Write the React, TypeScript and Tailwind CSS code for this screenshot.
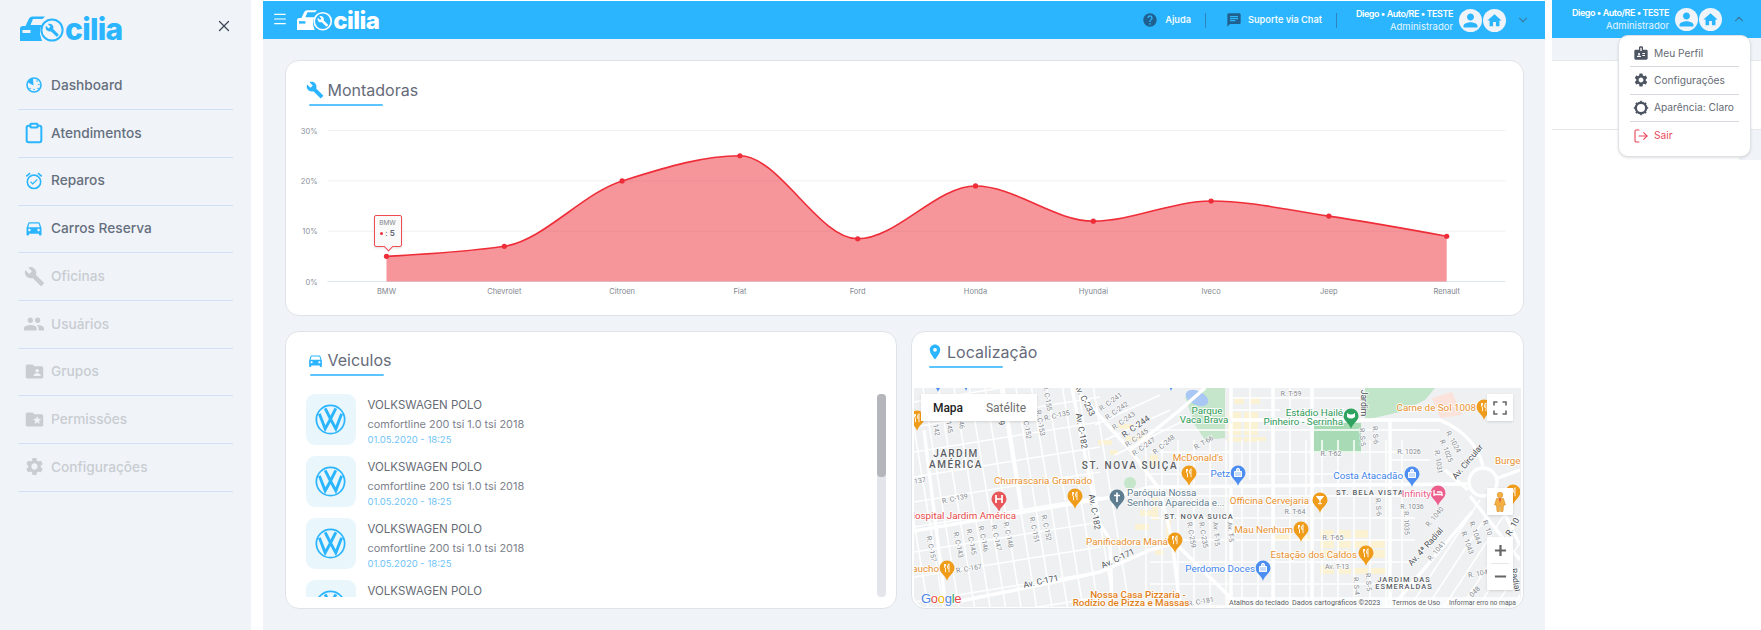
import React from 'react';
import { Clipboard, ChevronDown, ChevronUp, LogOut, Menu, X } from 'lucide-react';
import {
  MdBadge,
  MdBuild,
  MdChat,
  MdDirectionsCar,
  MdFolderShared,
  MdFolderSpecial,
  MdHelp,
  MdHome,
  MdLocationOn,
  MdOutlineAlarmOn,
  MdPeople,
  MdPerson,
  MdSettings,
} from 'react-icons/md';

const WRENCH =
  'M22.7 19l-9.1-9.1c.9-2.3.4-5-1.5-6.9-2-2-5-2.4-7.4-1.3L9 6 6 9 1.6 4.7C.4 7.1.9 10.1 2.9 12.1c1.9 1.9 4.6 2.4 6.9 1.5l9.1 9.1c.4.4 1 .4 1.4 0l2.3-2.3c.5-.4.5-1.1.1-1.4z';

const Logo = ({ color, cut, className }: { color: string; cut: string; className: string }) => (
  <svg viewBox="0 0 102 27" className={`overflow-visible ${className}`}>
    <path
      d="M0 26V13.5Q0 11 3 11H5.5L9 3.5Q10 1.5 12.5 1.5H25L22.5 4H13L10.5 10H21.5Q19.5 14 20 19L22 26Z"
      fill={color}
    />
    <rect x="2.5" y="15" width="8" height="3" fill={cut} />
    <circle cx="32" cy="15" r="10.6" fill="none" stroke={color} strokeWidth="2" />
    <path d={WRENCH} fill={color} transform="translate(25 8) scale(0.6)" />
    <text x="45" y="25" fontSize="30" fontWeight="800" fill={color} letterSpacing="-0.7">
      cilia
    </text>
  </svg>
);

const DashIcon = () => (
  <svg viewBox="0 0 16 16" className="h-[16px] w-[16px] text-[#2bb5ff]">
    <circle cx="8" cy="8" r="7" fill="none" stroke="currentColor" strokeWidth="1.6" />
    <path d="M7 1.5 A6.5 6.5 0 0 0 2 5.5L7.5 8.5Z" fill="currentColor" />
    <path d="M4 11.5h.1M8 12.5h.1M12 11.5h.1M12.8 7.5h.1M11 4h.1" stroke="currentColor" strokeWidth="1.5" strokeLinecap="round" />
  </svg>
);

const navItems = [
  { label: 'Dashboard', icon: <DashIcon />, active: true },
  { label: 'Atendimentos', icon: <Clipboard className="h-[22px] w-[22px] text-[#2bb5ff]" strokeWidth={2.2} />, active: true },
  { label: 'Reparos', icon: <MdOutlineAlarmOn className="h-[20px] w-[20px] text-[#2bb5ff]" />, active: true },
  { label: 'Carros Reserva', icon: <MdDirectionsCar className="h-[20px] w-[20px] text-[#2bb5ff]" />, active: true },
  { label: 'Oficinas', icon: <MdBuild className="h-[21px] w-[21px] text-[#c9ccd1]" />, active: false },
  { label: 'Usuários', icon: <MdPeople className="h-[22px] w-[22px] text-[#c9ccd1]" />, active: false },
  { label: 'Grupos', icon: <MdFolderShared className="h-[21px] w-[21px] text-[#c9ccd1]" />, active: false },
  { label: 'Permissões', icon: <MdFolderSpecial className="h-[21px] w-[21px] text-[#c9ccd1]" />, active: false },
  { label: 'Configurações', icon: <MdSettings className="h-[21px] w-[21px] text-[#c9ccd1]" />, active: false },
];

const Sidebar = () => (
  <aside className="flex h-[630px] w-[251px] shrink-0 flex-col bg-[#f0f4f9]">
    <div className="flex h-[62.5px] items-start justify-between pl-[20px] pr-[18px] pt-[15px]">
      <Logo color="#2bb5ff" cut="#f0f4f9" className="h-[27px] w-[102px]" />
      <X className="mt-[2px] h-[18px] w-[18px] text-[#3f4654]" strokeWidth={1.7} />
    </div>
    <nav className="mx-[18px] flex flex-col">
      {navItems.map((item) => (
        <div key={item.label} className="flex h-[47.7px] items-center border-b border-[#cfe0f7] pb-[1px]">
          <span className="ml-[4px] mr-[5px] flex w-[24px] justify-center">{item.icon}</span>
          <span className={`text-[13.7px] font-medium ${item.active ? 'text-[#666f7d]' : 'text-[#c9ccd1]'}`}>{item.label}</span>
        </div>
      ))}
    </nav>
  </aside>
);

const UserBlock = ({ open }: { open: boolean }) => (
  <div className="flex items-center">
    <div className="flex flex-col items-end text-right">
      <span className="text-[9px] font-semibold leading-[13px] tracking-[-0.45px] text-white">Diego • Auto/RE • TESTE</span>
      <span className="text-[9.5px] leading-[13px] text-[#e4f5ff]">Administrador</span>
    </div>
    <span className="ml-[6px] flex h-[23px] w-[23px] items-center justify-center rounded-full bg-[#f0f4f9]">
      <MdPerson className="h-[21px] w-[21px] text-[#2bb5ff]" />
    </span>
    <span className="ml-px flex h-[23px] w-[23px] items-center justify-center rounded-full bg-[#f0f4f9]">
      <MdHome className="h-[17px] w-[17px] text-[#2bb5ff]" />
    </span>
    <span className="ml-[9px] flex w-[16px] justify-center">
      {open ? <ChevronUp className="h-[14px] w-[14px] text-[#3b7ea8]" /> : <ChevronDown className="h-[14px] w-[14px] text-[#3b7ea8]" />}
    </span>
  </div>
);

const TopBar = () => (
  <header className="flex h-[38px] items-center justify-between bg-[#2bb5ff] pl-[9px] pr-[14px]">
    <div className="flex items-center">
      <Menu className="-mt-[3px] h-[16px] w-[16px] text-white" strokeWidth={1.8} />
      <Logo color="#ffffff" cut="#2bb5ff" className="-mt-[1px] ml-[9px] h-[22px] w-[82px]" />
    </div>
    <div className="flex items-center">
      <MdHelp className="h-[16px] w-[16px] text-[#20608f]" />
      <span className="ml-[7px] text-[9.2px] font-semibold text-[#eef9ff]">Ajuda</span>
      <span className="mx-[14px] h-[15px] w-px bg-[#2a86bd]" />
      <MdChat className="ml-[6px] h-[16px] w-[16px] text-[#20608f]" />
      <span className="ml-[6px] text-[9.2px] font-semibold text-[#eef9ff]">Suporte via Chat</span>
      <span className="ml-[14px] mr-[19px] h-[15px] w-px bg-[#2a86bd]" />
      <UserBlock open={false} />
    </div>
  </header>
);

const CardTitle = ({ icon, title }: { icon: React.ReactNode; title: string }) => (
  <div className="flex flex-col items-start">
    <div className="flex h-[24px] items-center">
      {icon}
      <span className="text-[16px] leading-[24px] text-[#666b7a]">{title}</span>
    </div>
    <div className="ml-[3px] mt-[2px] h-[2px] w-[74px] rounded-full bg-[#5cc4ff]" />
  </div>
);

const values = [5, 7, 20, 25, 8.5, 19, 12, 16, 13, 9];
const brands = ['BMW', 'Chevrolet', 'Citroen', 'Fiat', 'Ford', 'Honda', 'Hyundai', 'Iveco', 'Jeep', 'Renault'];
const STEP = 117.8;
const px = (i: number) => 386 + i * STEP;
const py = (v: number) => 281.5 - v * 5.03;

function curvePath() {
  const ys = values.map(py);
  const s = ys.slice(1).map((y, i) => (y - ys[i]) / STEP);
  const m = ys.map((_, i) => {
    if (i === 0 || i === ys.length - 1) return 0;
    if (s[i - 1] * s[i] <= 0) return 0;
    return (2 * s[i - 1] * s[i]) / (s[i - 1] + s[i]);
  });
  m[0] = (3 * s[0] - m[1]) / 2;
  m[ys.length - 1] = (3 * s[s.length - 1] - m[ys.length - 2]) / 2;
  let d = `M${px(0)} ${ys[0]}`;
  for (let i = 0; i < ys.length - 1; i++) {
    const k = STEP / 3;
    d += `C${px(i) + k} ${ys[i] + m[i] * k} ${px(i + 1) - k} ${ys[i + 1] - m[i + 1] * k} ${px(i + 1)} ${ys[i + 1]}`;
  }
  return d;
}

const AreaChart = () => {
  const line = curvePath();
  return (
    <div className="relative h-[204px] w-full">
      <svg viewBox="285.5 106 1237 204" className="h-[204px] w-full">
        {[0, 10, 20, 30].map((t) => (
          <g key={t}>
            <line x1="327" x2="1505" y1={py(t)} y2={py(t)} stroke={t === 0 ? '#e1e5ee' : '#eef0f3'} strokeWidth="1" />
            <text x="317" y={py(t) + 3} textAnchor="end" fontSize="7.5" fill="#8a8f98">
              {t}%
            </text>
          </g>
        ))}
        <path d={`${line}L${px(9)} ${py(0)}L${px(0)} ${py(0)}Z`} fill="#ee2d38" fillOpacity="0.5" />
        <path d={line} fill="none" stroke="#ee2d38" strokeWidth="1.6" />
        {values.map((v, i) => (
          <circle key={brands[i]} cx={px(i)} cy={py(v)} r="2.6" fill="#ee2d38" />
        ))}
        {brands.map((b, i) => (
          <text key={b} x={px(i)} y="294" textAnchor="middle" fontSize="7.5" fill="#83878f">
            {b}
          </text>
        ))}
      </svg>
      <div className="absolute left-[88px] top-[109px] flex h-[32px] w-[28px] flex-col items-center rounded-[2px] border border-[#ef4b52] bg-[#f9f9f9] pt-[3px] shadow-sm">
        <span className="text-[6.5px] leading-[9px] text-[#83878f]">BMW</span>
        <span className="flex items-center text-[8px] font-semibold leading-[11px] text-[#5a5f6a]">
          <span className="mr-[2px] h-[3px] w-[3px] rounded-full bg-[#ee2d38]" />
          <span className="font-normal">:</span>
          <span className="ml-[2px]">5</span>
        </span>
        <span className="absolute -bottom-[4px] left-[10px] h-[7px] w-[7px] rotate-45 border-b border-r border-[#ef4b52] bg-[#f9f9f9]" />
      </div>
    </div>
  );
};

const VwLogo = () => (
  <svg viewBox="0 0 32 32" className="h-[31px] w-[31px]">
    <circle cx="16" cy="16" r="14.6" fill="none" stroke="#2bb5ff" strokeWidth="1.8" />
    <path d="M10.5 4.5L16 15.5L21.5 4.5" fill="none" stroke="#2bb5ff" strokeWidth="3" />
    <path d="M4.5 10L10.5 25.5L16 15.5L21.5 25.5L27.5 10" fill="none" stroke="#2bb5ff" strokeWidth="3" />
  </svg>
);

const VehicleRow = () => (
  <div className="flex h-[51px] shrink-0 items-start">
    <div className="flex h-[51px] w-[50px] shrink-0 items-center justify-center rounded-[9px] bg-[#e9f6fc]">
      <VwLogo />
    </div>
    <div className="ml-[12px] flex flex-col pt-[2px]">
      <span className="text-[11.5px] leading-[18px] text-[#666b75]">VOLKSWAGEN POLO</span>
      <span className="text-[10.9px] leading-[20px] text-[#7d828b]">comfortline 200 tsi 1.0 tsi 2018</span>
      <span className="text-[9.5px] leading-[11px] text-[#6fc3f7]">01.05.2020 - 18:25</span>
    </div>
  </div>
);

const VehiclesCard = () => (
  <section className="flex h-[278px] flex-col rounded-[14px] border border-[#dfe3e8] bg-white">
    <div className="pl-[21px] pt-[16px]">
      <CardTitle icon={<MdDirectionsCar className="mr-[4px] h-[17px] w-[17px] text-[#2bb5ff]" />} title="Veiculos" />
    </div>
    <div className="mt-[18px] flex h-[203px] pl-[20px] pr-[10px]">
      <div className="flex flex-1 flex-col gap-[10.9px] overflow-hidden">
        <VehicleRow />
        <VehicleRow />
        <VehicleRow />
        <VehicleRow />
      </div>
      <div className="h-full w-[9px] rounded-[4px] bg-[#e3e5ea]">
        <div className="h-[83px] rounded-[4px] bg-[#b5b6bb]" />
      </div>
    </div>
  </section>
);

const GREY = '#85898f';
const roadLabels: [number, number, string, number][] = [
  [1047, 398, 'R. C-155', 80], [1040, 423, 'R. C-153', 80], [1057, 416, 'R. C-135', -13], [1027, 430, 'C-152', 80],
  [936, 430, '142', 80], [949, 427, '145', 80], [961, 425, '46', 80], [1111, 402, 'R. C-241', -35],
  [1117, 411, 'R. C-242', -35], [1124, 421, 'R. C-243', -35], [1137, 438, 'R. C-245', -35], [1144, 447, 'R. C-247', -35],
  [1164, 445, 'R. C-248', -40], [1204, 443, 'R. T-66', -30], [920, 481, '137', -10], [955, 499, 'R. C-139', -12],
  [1008, 535, 'R. C-148', 78], [996, 538, 'R. C-147', 78], [983, 539, 'R. C-146', 78], [971, 542, 'R. C-145', 78],
  [958, 545, 'R. C-143', 78], [931, 549, 'R. C-157', 78], [1034, 530, 'R. C-151', 78], [1046, 528, 'R. C-152', 78],
  [969, 569, 'R. C-167', -10], [1191, 535, 'R. C-259', 80], [1203, 535, 'R. C-235', 80], [1216, 534, 'Av. T-15', 85],
  [1230, 532, 'Av. T-5', 85], [1201, 602, 'R. C-181', -10], [1291, 394, 'R. T-59', 0], [1331, 454, 'R. T-62', 0],
  [1295, 512, 'R. T-64', 0], [1333, 538, 'R. T-65', 0], [1337, 567, 'Av. T-13', 0], [1362, 437, 'R. S-5', 85],
  [1375, 435, 'R. S-6', 85], [1378, 507, 'R. S-6', 85], [1368, 582, 'R. S-5', 85], [1356, 586, 'R. S-4', 85],
  [1409, 452, 'R. 1026', 0], [1412, 507, 'R. 1036', 0], [1406, 523, 'R. 1035', 88], [1438, 462, 'R. 1031', 82],
  [1446, 451, 'R. 1025', 68], [1453, 442, 'R. 1024', 62], [1435, 517, 'R. 1040', -50], [1437, 551, 'R. 1041', -50],
  [1475, 533, 'R. 1044', 70], [1467, 543, 'R. 1043', 70], [1487, 528, 'R. 10', 70], [1478, 574, 'R. 104', -10],
  [1475, 592, '048', -45],
];
const majorLabels: [number, number, string, number][] = [
  [1084, 400, 'Av. C-233', 62], [1081, 431, 'Av. C-182', 80], [1094, 512, 'Av. C-182', 80], [1136, 427, 'R. C-244', -35],
  [1041, 582, 'Av. C-171', -12], [1118, 559, 'Av. C-171', -25], [1363, 403, 'Jardim', 90], [1468, 462, 'Av. Circular', -50],
  [1426, 547, 'Av. 4ª Radial', -48], [1513, 527, 'R. 10', -60], [1515, 580, 'Radial', 80], [1001, 423, '9', 80],
];
const areaLabels: [number, number, string, number, number][] = [
  [956, 457, 'JARDIM', 10, 1.5], [956, 468, 'AMÉRICA', 10, 1.5], [1130, 469, 'ST. NOVA SUIÇA', 10, 1.6],
  [1199, 519, 'ST. NOVA SUICA', 7.5, 1], [1370, 495, 'ST. BELA VISTA', 7.5, 1.1], [1404, 582, 'JARDIM DAS', 7.5, 1],
  [1404, 589, 'ESMERALDAS', 7.5, 1],
];
const ORANGE = '#e8912f';
const BLUE = '#3e84ec';
const poiLabels: [number, number, string, string, 'middle' | 'end' | 'start', number?][] = [
  [1043, 484, 'Churrascaria Gramado', ORANGE, 'middle'], [1127, 545, 'Panificadora Maná', ORANGE, 'middle'],
  [1198, 461, "McDonald's", ORANGE, 'middle'], [939, 572, 'Gaucho', ORANGE, 'end'], [1138, 598, 'Nossa Casa Pizzaria -', '#e37f17', 'middle', 500],
  [1131, 606, 'Rodízio de Pizza e Massas', '#e37f17', 'middle', 500], [1309, 504, 'Officina Cervejaria', ORANGE, 'end'],
  [1293, 533, 'Mau Nenhum', ORANGE, 'end'], [1357, 558, 'Estação dos Caldos', ORANGE, 'end'], [1476, 411, 'Carne de Sol 1008', ORANGE, 'end'],
  [1495, 464, 'Burge', ORANGE, 'start'], [1230, 477, 'Petz', BLUE, 'end'], [1403, 479, 'Costa Atacadão', BLUE, 'end'],
  [1255, 572, 'Perdomo Doces', BLUE, 'end'], [962, 519, 'Hospital Jardim América', '#e8494a', 'middle'],
  [1431, 497, 'Infinity', '#ec5f8d', 'end'], [1207, 414, 'Parque', '#2e9a58', 'middle'], [1204, 423, 'Vaca Brava', '#2e9a58', 'middle'],
  [1343, 416, 'Estádio Hailé', '#2e9a58', 'end'], [1343, 425, 'Pinheiro - Serrinha', '#2e9a58', 'end'],
  [1127, 496, 'Paróquia Nossa', '#5f7d90', 'start'], [1127, 506, 'Senhora Aparecida e...', '#5f7d90', 'start'],
];
type Glyph = 'fork' | 'bag' | 'glass' | 'bed' | 'cross' | 'H' | 'stadium';
const pins: [number, number, string, Glyph][] = [
  [917, 418, '#f09c1b', 'fork'], [1075, 496, '#f09c1b', 'fork'], [1175, 540, '#f09c1b', 'fork'], [1189, 473, '#f09c1b', 'fork'],
  [947, 568, '#f09c1b', 'fork'], [1320, 500, '#f09c1b', 'glass'], [1301, 529, '#f09c1b', 'fork'], [1366, 553, '#f09c1b', 'fork'],
  [1484, 407, '#f09c1b', 'fork'], [1513, 492, '#f09c1b', 'fork'], [1238, 473, '#4b8df0', 'bag'], [1412, 474, '#4b8df0', 'bag'],
  [1263, 568, '#4b8df0', 'bag'], [999, 499, '#e8585a', 'H'], [1438, 493, '#ec5f8d', 'bed'], [1351, 416, '#2ea35f', 'stadium'],
  [1117, 497, '#5f7d90', 'cross'], [938, 379, '#4b8df0', 'bag'], [966, 378, '#4b8df0', 'bag'], [1171, 378, '#4b8df0', 'bag'],
];

const PinGlyph = ({ x, y, glyph }: { x: number; y: number; glyph: Glyph }) => {
  if (glyph === 'H') {
    return <path d={`M${x - 3} ${y - 4}v8M${x + 3} ${y - 4}v8M${x - 3} ${y}h6`} stroke="#fff" strokeWidth="1.7" fill="none" />;
  }
  if (glyph === 'cross') {
    return <path d={`M${x} ${y - 4.5}v9.5M${x - 3} ${y - 1.5}h6`} stroke="#fff" strokeWidth="1.7" fill="none" />;
  }
  if (glyph === 'bag') {
    return <path d={`M${x - 3.5} ${y - 1.5}h7v5h-7zM${x - 1.6} ${y - 1.5}v-1.6a1.6 1.6 0 0 1 3.2 0v1.6`} stroke="#fff" strokeWidth="1" fill="#fff" fillOpacity="0.7" />;
  }
  if (glyph === 'glass') {
    return <path d={`M${x - 3.5} ${y - 3.5}h7L${x} ${y + 0.5}ZM${x} ${y}v3.5M${x - 2} ${y + 3.7}h4`} stroke="#fff" strokeWidth="1" fill="#fff" />;
  }
  if (glyph === 'bed') {
    return <path d={`M${x - 4} ${y - 3}v6M${x - 4} ${y + 1.5}h8v1.5M${x - 1} ${y - 1}h4q1 0 1 2`} stroke="#fff" strokeWidth="1.3" fill="none" />;
  }
  if (glyph === 'stadium') {
    return <path d={`M${x - 4} ${y - 3}q4 3 8 0v4q-4 3-8 0z`} fill="#fff" />;
  }
  return <path d={`M${x - 2.5} ${y - 4}v3q0 1 1 1.2v4M${x - 1.5} ${y - 4}v2.5M${x + 2} ${y + 4.2}v-8.5q-1.5 1-1.5 3.5v1h1.5`} stroke="#fff" strokeWidth="0.9" fill="none" />;
};

const yellowBlocks: [number, number, number, number][] = [
  [1228, 412, 13, 23], [1244, 412, 14, 23], [1234, 398, 10, 6], [1250, 398, 10, 6], [1228, 437, 14, 5], [1244, 437, 14, 5],
  [1258, 437, 8, 4], [1320, 530, 14, 8], [1337, 530, 14, 8], [1354, 530, 14, 8], [1320, 540, 14, 8], [1337, 540, 14, 8],
  [1354, 540, 14, 8], [1371, 540, 14, 8], [1320, 550, 14, 8], [1337, 550, 14, 8], [1371, 550, 14, 8], [1320, 566, 14, 8],
  [1337, 568, 14, 6], [1354, 568, 14, 6], [1371, 568, 14, 6], [1300, 535, 10, 6], [1272, 535, 18, 5], [1098, 440, 14, 5],
  [1110, 450, 8, 5], [1118, 424, 16, 5], [1126, 436, 14, 5], [1140, 430, 6, 12], [1150, 455, 8, 12], [1140, 510, 14, 6],
  [1135, 524, 14, 6], [1152, 498, 6, 22], [1166, 520, 5, 20], [1155, 550, 9, 5],
];

const MapView = () => {
  const verticalsA = Array.from({ length: 14 }, (_, i) => 892 + i * 15.5);
  const horizontalsA = Array.from({ length: 10 }, (_, i) => 402 + i * 25);
  const verticalsB = Array.from({ length: 17 }, (_, i) => 1146 + i * 16);
  const horizontalsB = Array.from({ length: 9 }, (_, i) => 430 + i * 22);
  const diagonals = Array.from({ length: 7 }, (_, i) => 1410 + i * 17);
  return (
    <div className="relative mx-[2px] mt-[20px] h-[219px] overflow-hidden rounded-b-[12px] bg-[#eef0f2]">
      <svg viewBox="914 388 606 219" className="h-[219px] w-[606px] font-[Roboto,sans-serif]">
        <polygon points="1185,397 1207,388 1225,388 1225,438 1205,440 1195,425" fill="#c5e6cb" />
        <ellipse cx="1197" cy="398" rx="12" ry="7" transform="rotate(25 1197 398)" fill="#a9c7f5" />
        <polygon points="1365,388 1435,388 1425,400 1400,412 1365,420" fill="#c1e5c9" />
        <polygon points="1432,398 1452,392 1462,415 1440,418" fill="#fbe3dc" />
        <rect x="1314" y="423" width="47" height="30" fill="#a8dab5" />
        {yellowBlocks.map(([x, y, w, h]) => (
          <rect key={`${x}-${y}`} x={x} y={y} width={w} height={h} fill="#fbf1d3" />
        ))}
        <g stroke="#ffffff" fill="none" strokeWidth="1.5">
          {verticalsA.map((x) => (
            <line key={x} x1={x} y1="388" x2={x + 36} y2="607" />
          ))}
          {horizontalsA.map((y) => (
            <line key={y} x1="914" y1={y} x2="1100" y2={y - 30} />
          ))}
          {verticalsB.map((x) => (
            <line key={x} x1={x} y1="440" x2={x} y2="607" />
          ))}
          {horizontalsB.map((y) => (
            <line key={y} x1="1150" y1={y} x2="1415" y2={y} />
          ))}
          {diagonals.map((x) => (
            <line key={x} x1={x} y1="607" x2={x + 70} y2="500" />
          ))}
          <path d="M1230 398H1360M1230 410H1280M1290 388V480M1250 388V480M1390 430H1440M1390 460H1430" />
          <path d="M1095 425L1160 395M1105 440L1170 410M1115 455L1185 420" />
        </g>
        <g stroke="#ffffff" fill="none" strokeWidth="3.4">
          <path d="M914 531L1112 497L1150 487L1250 486L1467 484" />
          <path d="M950 603L1040 585L1100 572L1150 550L1175 543L1240 607" />
          <path d="M1072 388L1082 440L1098 520L1110 540L1112 607" />
          <path d="M1075 388L1130 450L1160 490L1172 540L1180 607" />
          <path d="M1130 450L1180 410L1205 388" />
          <path d="M1003 388L1022 510M924 430L945 600" />
          <path d="M1273 388V607M1312 388V607M1231 388V480M1231 486V607" />
          <path d="M1230 420H1440Q1475 435 1483 466M1390 420V600" />
          <path d="M1392 607L1472 512" />
          <path d="M1495 494L1520 545M1498 478L1520 470M1468 490L1445 470M1470 496L1520 560" />
        </g>
        <circle cx="1483" cy="482" r="14" fill="#eef0f2" stroke="#ffffff" strokeWidth="3.4" />
        <circle cx="1130" cy="483" r="6" fill="#c5e6cb" />
        <g stroke="#ffffff" strokeWidth="1.6" strokeOpacity="0.75" paintOrder="stroke">
          {roadLabels.map(([x, y, t, r]) => (
            <text key={`${x}-${y}`} x={x} y={y} fontSize="7" fill={GREY} textAnchor="middle" dominantBaseline="middle" transform={`rotate(${r} ${x} ${y})`}>
              {t}
            </text>
          ))}
          {majorLabels.map(([x, y, t, r]) => (
            <text key={`${x}-${y}`} x={x} y={y} fontSize="8.5" fill="#4b4f55" textAnchor="middle" dominantBaseline="middle" transform={`rotate(${r} ${x} ${y})`}>
              {t}
            </text>
          ))}
          {areaLabels.map(([x, y, t, s, sp]) => (
            <text key={t} x={x} y={y} fontSize={s} fontWeight="500" letterSpacing={sp} fill="#5a5e64" textAnchor="middle">
              {t}
            </text>
          ))}
        </g>
        {pins.map(([x, y, c, g]) => (
          <g key={`${x}-${y}`}>
            <path d={`M${x} ${y + 13}C${x - 1} ${y + 8} ${x - 7.5} ${y + 5} ${x - 7.5} ${y}a7.5 7.5 0 1 1 15 0C${x + 7.5} ${y + 5} ${x + 1} ${y + 8} ${x} ${y + 13}Z`} fill={c} />
            <PinGlyph x={x} y={y} glyph={g} />
          </g>
        ))}
        <g stroke="#ffffff" strokeWidth="2" strokeOpacity="0.85" paintOrder="stroke">
          {poiLabels.map(([x, y, t, c, a, w]) => (
            <text key={t} x={x} y={y} fontSize="9.8" fill={c} textAnchor={a} fontWeight={w ?? 400}>
              {t}
            </text>
          ))}
        </g>
        <rect x="1226" y="597" width="294" height="10" fill="#ffffff" fillOpacity="0.72" />
        <g fontSize="7.2" fill="#5c5f64">
          <text x="1229" y="605">Atalhos do teclado</text>
          <text x="1292" y="605">Dados cartográficos ©2023</text>
          <text x="1392" y="605">Termos de Uso</text>
          <text x="1449" y="605" textLength="67" lengthAdjust="spacingAndGlyphs">Informar erro no mapa</text>
        </g>
        <text x="921" y="603" fontSize="13" fontWeight="500" fontFamily="Liberation Sans, sans-serif" letterSpacing="-0.3" stroke="#ffffff" strokeWidth="1.5" strokeOpacity="0.7" paintOrder="stroke">
          <tspan fill="#4a86e8">G</tspan>
          <tspan fill="#e8494a">o</tspan>
          <tspan fill="#f4b400">o</tspan>
          <tspan fill="#4a86e8">g</tspan>
          <tspan fill="#2ea35f">l</tspan>
          <tspan fill="#e8494a">e</tspan>
        </text>
      </svg>

      <div className="absolute left-[7px] top-[6px] flex h-[27px] w-[116px] items-center bg-white font-[Roboto,sans-serif] text-[12px] shadow-sm">
        <span className="flex h-full w-[54px] items-center justify-center font-medium text-[#222]">Mapa</span>
        <span className="flex h-full flex-1 items-center justify-center text-[#6f6f6f]">Satélite</span>
      </div>
      <div className="absolute left-[573px] top-[6px] flex h-[27px] w-[26px] items-center justify-center bg-white shadow-sm">
        <svg viewBox="0 0 14 14" className="h-[14px] w-[14px]">
          <path d="M1 4.5V1H4.5M9.5 1H13V4.5M13 9.5V13H9.5M4.5 13H1V9.5" fill="none" stroke="#666" strokeWidth="1.6" />
        </svg>
      </div>
      <div className="absolute left-[573px] top-[100px] flex h-[27px] w-[26px] items-center justify-center bg-white shadow-sm">
        <svg viewBox="0 0 12 20" className="h-[20px] w-[12px]">
          <circle cx="6" cy="3" r="2.8" fill="#f5b041" stroke="#c9851a" strokeWidth="0.5" />
          <path d="M2.5 6.5H9.5L11.5 13H9.5L9 19.5H6.6V14H5.4V19.5H3L2.5 13H.5Z" fill="#f5b041" stroke="#c9851a" strokeWidth="0.5" />
          <path d="M5 6.5H7L6 11Z" fill="#d9443f" />
        </svg>
      </div>
      <div className="absolute left-[573px] top-[149px] flex h-[53px] w-[26px] flex-col items-center bg-white text-[#666] shadow-sm">
        <svg viewBox="0 0 14 14" className="mt-[7px] h-[13px] w-[13px]">
          <path d="M7 1V13M1 7H13" stroke="#666" strokeWidth="2.4" />
        </svg>
        <span className="mt-[6px] h-px w-[18px] bg-[#e6e6e6]" />
        <svg viewBox="0 0 14 14" className="mt-[6px] h-[13px] w-[13px]">
          <path d="M1 7H13" stroke="#666" strokeWidth="2.4" />
        </svg>
      </div>
    </div>
  );
};

const LocationCard = () => (
  <section className="flex h-[278px] flex-col rounded-[14px] border border-[#dfe3e8] bg-white">
    <div className="pl-[14px] pt-[8px]">
      <CardTitle icon={<MdLocationOn className="mr-[3px] h-[18px] w-[18px] text-[#2bb5ff]" />} title="Localização" />
    </div>
    <MapView />
  </section>
);

const MenuRow = ({ icon, label, danger, last }: { icon: React.ReactNode; label: string; danger?: boolean; last?: boolean }) => (
  <div className={`flex h-[27.3px] items-center ${last ? '' : 'border-b border-[#d6d9de]'}`}>
    <span className="ml-[3px] mr-[5px] flex w-[16px] justify-center">{icon}</span>
    <span className={`text-[10.2px] ${danger ? 'text-[#e8495c]' : 'text-[#666b75]'}`}>{label}</span>
  </div>
);

const GearRing = () => (
  <svg viewBox="0 0 16 16" className="h-[16px] w-[16px]">
    <circle cx="8" cy="8" r="5.2" fill="none" stroke="#4c5361" strokeWidth="2.4" />
    <path d="M8 .8V3M8 13V15.2M.8 8H3M13 8H15.2M2.9 2.9L4.4 4.4M11.6 11.6L13.1 13.1M13.1 2.9L11.6 4.4M4.4 11.6L2.9 13.1" stroke="#4c5361" strokeWidth="1.6" />
  </svg>
);

const DropdownPanel = () => (
  <div className="relative ml-[7px] flex h-[630px] flex-1 flex-col">
    <div className="flex h-[38px] items-center justify-end bg-[#2bb5ff] pr-[14px]">
      <UserBlock open />
    </div>
    <div className="h-[22px] bg-[#f0f4f9]" />
    <div className="h-[70px] border-y border-[#e6e8ec] bg-white" />
    <div className="flex h-[30px] justify-end bg-white">
      <div className="w-[22px] bg-[#f0f4f9]" />
    </div>
    <div className="absolute left-[66px] top-[35px] h-[122px] w-[133px] rounded-[10px] border border-[#dfe2e6] bg-white px-[11px] pt-[4px] shadow-sm">
      <MenuRow icon={<MdBadge className="h-[16px] w-[16px] text-[#4c5361]" />} label="Meu Perfil" />
      <MenuRow icon={<MdSettings className="h-[16px] w-[16px] text-[#4c5361]" />} label="Configurações" />
      <MenuRow icon={<GearRing />} label="Aparência: Claro" />
      <MenuRow icon={<LogOut className="h-[16px] w-[16px] text-[#e8495c]" strokeWidth={1.7} />} label="Sair" danger last />
    </div>
  </div>
);

export default function App() {
  return (
    <div className="flex h-[630px] w-[1761px] overflow-hidden bg-white font-['Inter',sans-serif]">
      <Sidebar />
      <main className="ml-[12px] mt-px flex h-[629px] w-[1282px] shrink-0 flex-col bg-[#f0f4f9]">
        <TopBar />
        <div className="flex flex-col gap-[15px] px-[21.5px] pt-[21px]">
          <section className="h-[256px] rounded-[14px] border border-[#dfe3e8] bg-white">
            <div className="pl-[20px] pt-[17px]">
              <CardTitle icon={<MdBuild className="mr-[4px] h-[18px] w-[18px] text-[#2bb5ff]" />} title="Montadoras" />
            </div>
            <AreaChart />
          </section>
          <div className="grid grid-cols-2 gap-[14px]">
            <VehiclesCard />
            <LocationCard />
          </div>
        </div>
      </main>
      <DropdownPanel />
    </div>
  );
}
